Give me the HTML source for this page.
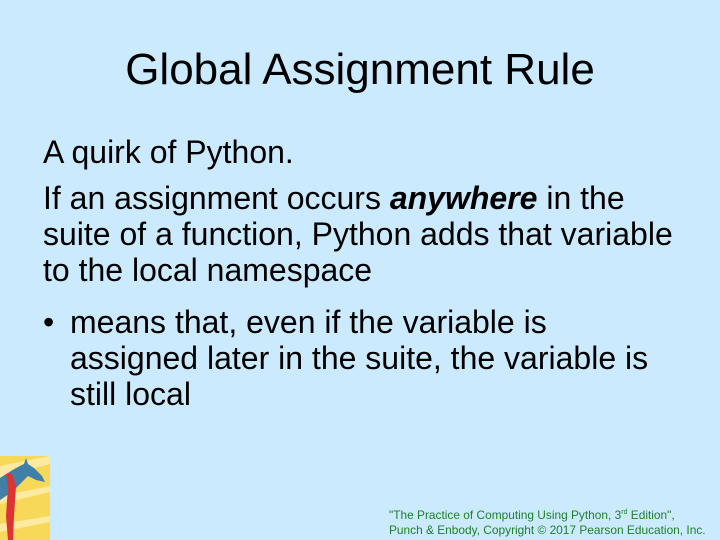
<!DOCTYPE html>
<html><head><meta charset="utf-8"><style>
html,body{margin:0;padding:0}
body{width:720px;height:540px;background:#cbeafe;position:relative;overflow:hidden;font-family:"Liberation Sans",Arial,sans-serif;color:#000}
.t{position:absolute;left:0;width:720px;text-align:center;top:43px;font-size:44px;line-height:54px}
.l{position:absolute;left:43px;font-size:32px;line-height:36px;white-space:nowrap}
.f{position:absolute;left:389px;top:505px;font-size:11.9px;line-height:15px;color:#1f7f2a;white-space:nowrap}
</style></head><body>
<div class="t">Global Assignment Rule</div>
<div class="l" style="top:134px">A quirk of Python.</div>
<div class="l" style="top:180px">If an assignment occurs <b><i>anywhere</i></b> in the</div>
<div class="l" style="top:216px">suite of a function, Python adds that variable</div>
<div class="l" style="top:252px">to the local namespace</div>
<div class="l" style="top:304px">•</div>
<div class="l" style="top:304px;left:70px">means that, even if the variable is</div>
<div class="l" style="top:340px;left:70px">assigned later in the suite, the variable is</div>
<div class="l" style="top:376px;left:70px">still local</div>
<svg style="position:absolute;left:0;top:456px" width="50" height="84" viewBox="0 0 50 84">
<rect width="50" height="84" fill="#f8d858"/>
<path d="M0 10 L50 0 L50 8 L0 22Z M0 40 L50 30 L50 36 L0 48Z M0 68 L50 60 L50 66 L0 76Z" fill="#fbeaa0"/>
<path d="M0 22 Q15 12 24 8 L26 2 L28 8 L34 12 L42 20 L45 26 L36 24 L28 20 L14 34 L6 40 L0 44Z" fill="#3f7fa8"/>
<path d="M6 18 L12 18 L16 30 L14 60 L13 84 L8 84 L6 60 L8 30Z" fill="#d33"/>
</svg>
<div class="f">"The Practice of Computing Using Python, 3<sup style="font-size:7px">rd</sup> Edition",<br>Punch &amp; Enbody, Copyright © 2017 Pearson Education, Inc.</div>
</body></html>
